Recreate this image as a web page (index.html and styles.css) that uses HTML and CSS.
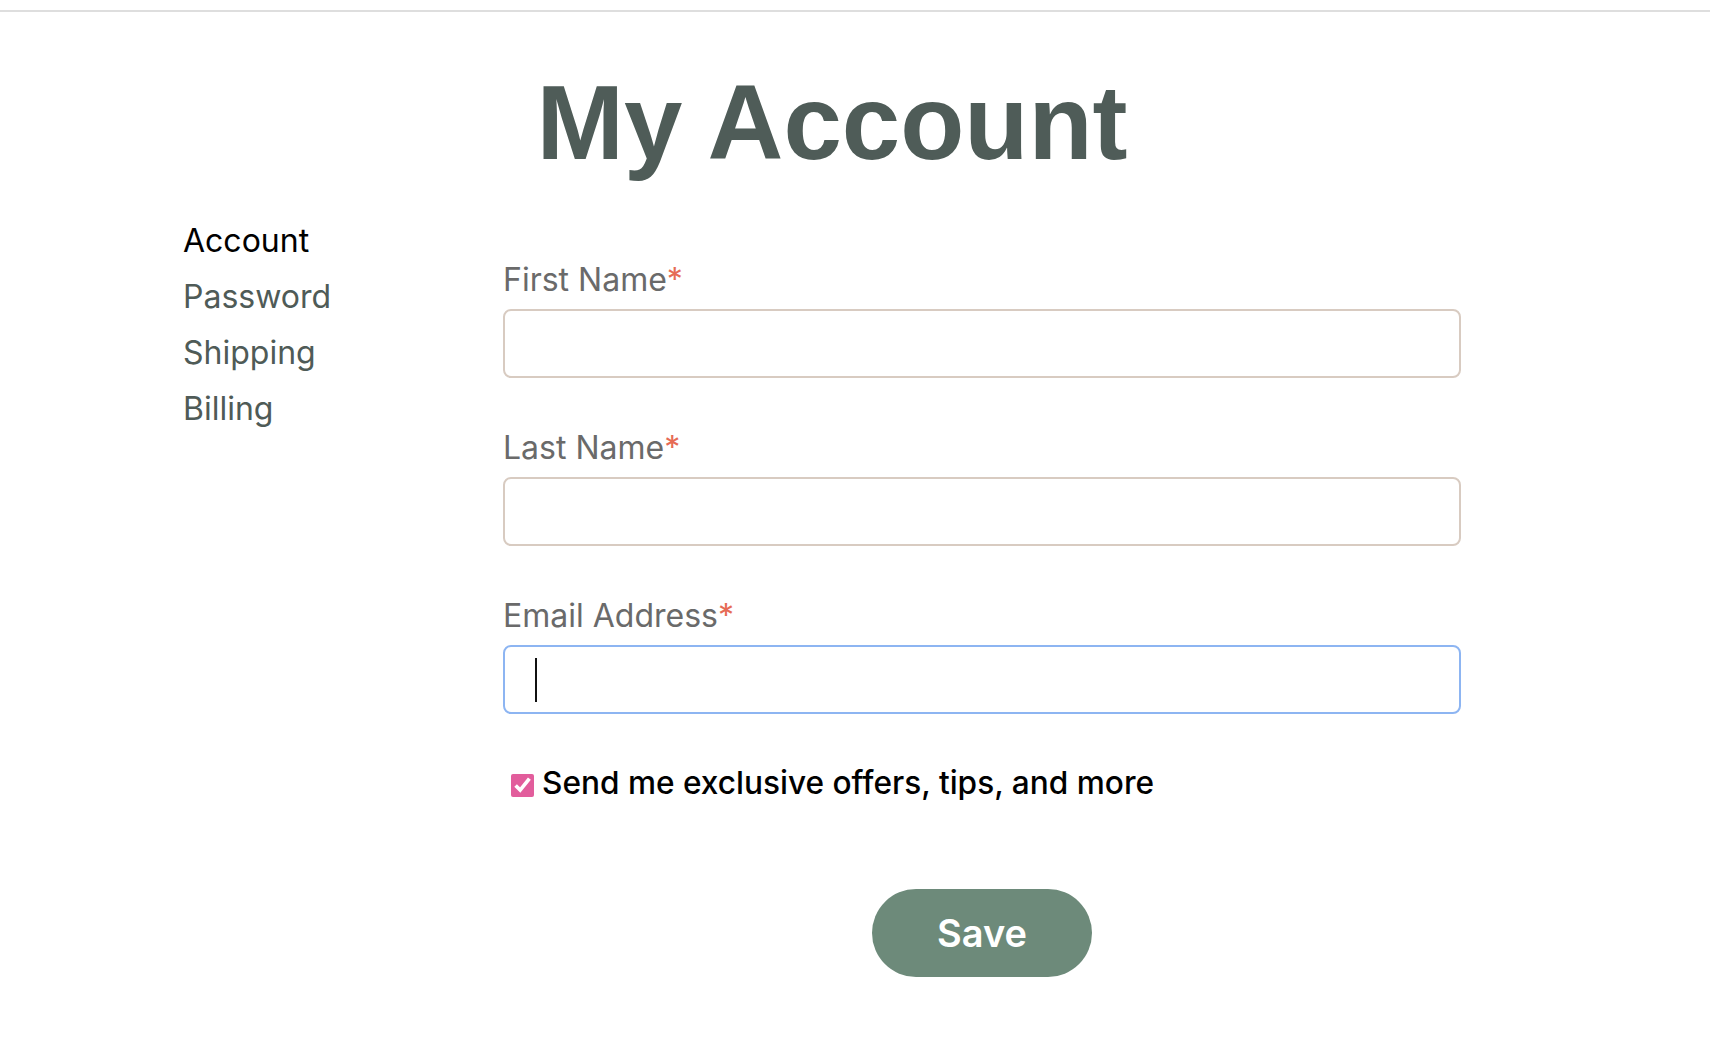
FILE: index.html
```html
<!DOCTYPE html>
<html lang="en">
<head>
<meta charset="utf-8">
<title>My Account</title>
<link rel="stylesheet" href="styles.css">
</head>
<body>
<div class="topbar"></div>
<main class="page">
  <h1 class="title">My Account</h1>
  <div class="layout">
    <nav class="side-nav">
      <a class="nav-link active" href="#">Account</a>
      <a class="nav-link" href="#">Password</a>
      <a class="nav-link" href="#">Shipping</a>
      <a class="nav-link" href="#">Billing</a>
    </nav>
    <form class="account-form">
      <div class="field">
        <label class="field-label" for="first">First Name<span class="req">*</span></label>
        <input class="field-input" id="first" type="text">
      </div>
      <div class="field">
        <label class="field-label" for="last">Last Name<span class="req">*</span></label>
        <input class="field-input" id="last" type="text">
      </div>
      <div class="field field-last">
        <label class="field-label" for="email">Email Address<span class="req">*</span></label>
        <div class="input-wrap">
          <input class="field-input focused" id="email" type="email">
          <span class="caret"></span>
        </div>
      </div>
      <label class="check-row">
        <input class="check" type="checkbox" checked>
        <span class="check-text">Send me exclusive offers, tips, and more</span>
      </label>
      <div class="actions">
        <button class="save-btn" type="button">Save</button>
      </div>
    </form>
  </div>
</main>
</body>
</html>
```
FILE: styles.css
```css
* { box-sizing: border-box; }
html, body { margin: 0; padding: 0; background: #fff; }
body { font-family: Inter, "Noto Sans", sans-serif; }

.topbar {
  height: 12px;
  border-bottom: 2px solid #dedede;
}

.page {
  padding: 0 229px 0 183px;
}

.title {
  margin: 59px 0 0;
  font-family: "Liberation Sans", Arial, sans-serif;
  font-weight: 700;
  font-size: 105px;
  line-height: 104px;
  color: #4f5c58;
  text-align: center;
}

.layout {
  display: grid;
  grid-template-columns: 320px 1fr;
  margin-top: 38px;
}

.side-nav {
  display: flex;
  flex-direction: column;
}

.nav-link {
  font-size: 32px;
  line-height: 56px;
  color: #4f5b57;
  text-decoration: none;
}
.nav-link.active { color: #000; }

.account-form {
  padding: 49px 20px 0 0;
  display: flex;
  flex-direction: column;
}

.field {
  display: flex;
  flex-direction: column;
  margin-bottom: 52px;
}
.field.field-last { margin-bottom: 0; }

.field-label {
  font-size: 32px;
  line-height: 36px;
  color: #6a6a6a;
  margin-bottom: 11px;
}
.req { color: #e66b55; }

.input-wrap { position: relative; }

.field-input {
  display: block;
  width: 100%;
  height: 69px;
  border: 2px solid #d8cbc1;
  border-radius: 8px;
  background: #fff;
  outline: none;
  font: inherit;
  font-size: 30px;
  padding: 0 30px;
}
.field-input.focused { border-color: #8db5f2; }

.caret {
  position: absolute;
  left: 32px;
  top: 13px;
  width: 2px;
  height: 44px;
  background: #111;
}

.check-row {
  display: flex;
  align-items: center;
  gap: 8px;
  margin-top: 51px;
  padding-left: 8px;
  height: 36px;
}
.check {
  margin: 4px 0 0;
  width: 23px;
  height: 23px;
  accent-color: #e25d9c;
}
.check-text {
  font-size: 31.6px;
  line-height: 36px;
  font-weight: 500;
  color: #000;
}

.actions {
  display: flex;
  justify-content: center;
  margin-top: 88px;
}
.save-btn {
  width: 220px;
  height: 88px;
  border: none;
  border-radius: 44px;
  background: #6d8a7a;
  color: #fff;
  font-family: Inter, "Noto Sans", sans-serif;
  font-size: 38px;
  font-weight: 600;
  cursor: pointer;
}
```
